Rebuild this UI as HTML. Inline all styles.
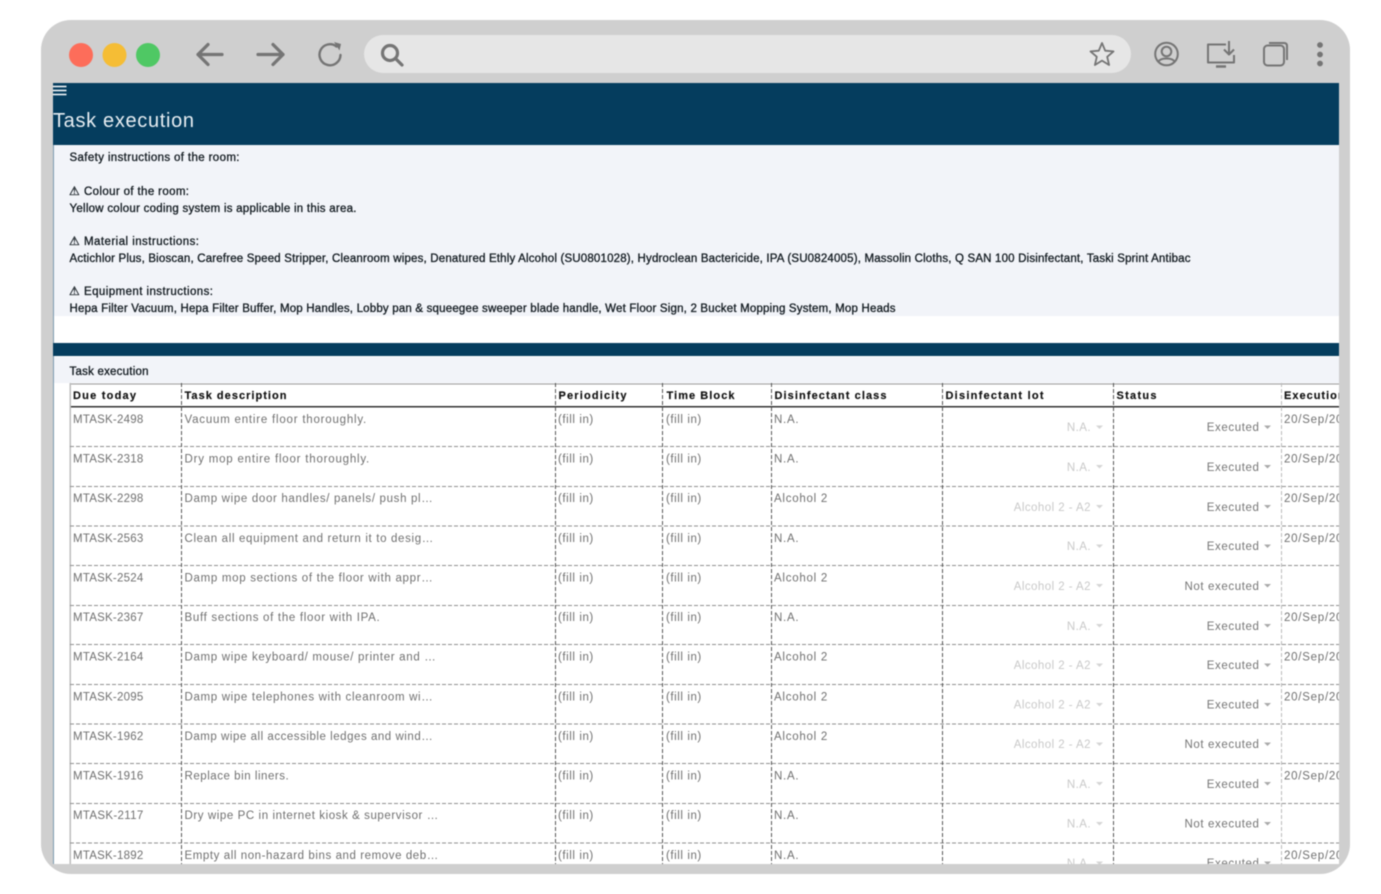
<!DOCTYPE html>
<html><head><meta charset="utf-8"><title>Task execution</title>
<style>
html,body{margin:0;padding:0;background:#fff;width:1381px;height:894px;overflow:hidden}
svg{display:block;position:absolute;left:0;top:0;filter:blur(.4px)}
text{font-family:"Liberation Sans",sans-serif;white-space:pre}
.b{font-size:11.5px;fill:#141c22;stroke:#141c22;stroke-width:.32px}
.h{font-size:11px;font-weight:bold;fill:#111;letter-spacing:1px;stroke:#111;stroke-width:.15px}
.c{font-size:11.5px;fill:#707070;letter-spacing:.75px}
.l{font-size:11.5px;fill:#c9c9c9;letter-spacing:.45px;text-anchor:end}
.s{font-size:11.5px;fill:#757575;letter-spacing:.6px;text-anchor:end}
.w{font-family:"DejaVu Sans",sans-serif;font-size:12px;fill:#141c22;stroke:#141c22;stroke-width:.35px}
.ic{fill:none;stroke:#757575;stroke-width:3.200;stroke-linecap:round;stroke-linejoin:round}
.ic2{fill:none;stroke:#757575;stroke-width:2;stroke-linejoin:round}
.hd{stroke:#8f8f8f;stroke-width:1;stroke-dasharray:4 2;fill:none}
.vd{stroke:#555;stroke-width:1;stroke-dasharray:4 2;fill:none}
</style></head><body>
<svg width="1381" height="894" viewBox="0 0 1381 894" xmlns="http://www.w3.org/2000/svg">
<defs><clipPath id="cp"><rect x="53" y="83" width="1286" height="781"/></clipPath></defs>
<rect x="41" y="20" width="1309" height="854" rx="30" fill="#cfcfcf"/>
<circle cx="81" cy="55" r="12" fill="#fd6d5a"/><circle cx="114.500" cy="55" r="12" fill="#f5bd35"/><circle cx="148" cy="55" r="12" fill="#4fc864"/>
<path class="ic" d="M222 54.500H198M208 44.500L198 54.500L208 64.500"/>
<path class="ic" d="M258 54.500H283M273 44.500L283 54.500L273 64.500"/>
<path class="ic" style="stroke-width:2.400" d="M336.500 46.500A10.500 10.500 0 1 0 340.500 55"/><path d="M334 42L341 44L339.500 50.500Z" fill="#757575"/>
<rect x="364" y="35" width="767" height="38" rx="19" fill="#e6e6e6"/>
<circle cx="390" cy="53" r="7.500" class="ic"/><path class="ic" d="M396 59L402 65"/>
<path class="ic2" style="stroke-width:1.800" d="M1102 43L1105.200 50.700L1113.500 51.400L1107.200 56.800L1109.100 65L1102 60.600L1094.900 65L1096.800 56.800L1090.500 51.400L1098.800 50.700Z"/>
<circle cx="1166.500" cy="54" r="11.300" class="ic2"/><circle cx="1166.500" cy="51.500" r="4.800" class="ic2"/><path class="ic2" d="M1158.500 61.500C1161 57.500 1172 57.500 1174.500 61.500"/>
<path class="ic2" d="M1226 44.500H1208V62.500H1234V55"/><path class="ic2" d="M1216 66.500H1226" style="stroke-width:2.500"/>
<path class="ic2" d="M1229 41V54M1224 49.500L1229 54.500L1234 49.500"/>
<rect x="1264" y="45.500" width="20" height="20" rx="3.500" class="ic2"/><path class="ic2" d="M1269 43H1284Q1287 43 1287 46V60"/>
<circle cx="1320" cy="45" r="2.900" fill="#757575"/><circle cx="1320" cy="54.500" r="2.900" fill="#757575"/><circle cx="1320" cy="63.500" r="2.900" fill="#757575"/>

<g clip-path="url(#cp)">
<rect x="53" y="83" width="1286" height="781" fill="#fff"/>
<rect x="53" y="83" width="1286" height="62" fill="#053d5e"/>
<rect x="53" y="145" width="1" height="719" fill="#7d9bb0"/>
<path d="M53 86.500H66.500M53 90.500H66.500M53 94.500H66.500" stroke="#fff" stroke-width="1.500"/>
<text x="53" y="127" font-size="20" fill="#e6edf2" textLength="141">Task execution</text>
<rect x="54" y="145" width="1285" height="171" fill="#f2f4f9"/>
<text class="b" x="69.500" y="161" textLength="170">Safety instructions of the room:</text>
<text class="w" x="69" y="195">⚠</text><text class="b" x="84" y="195" textLength="105">Colour of the room:</text>
<text class="b" x="69.500" y="212" textLength="287">Yellow colour coding system is applicable in this area.</text>
<text class="w" x="69" y="245">⚠</text><text class="b" x="84" y="245" textLength="115">Material instructions:</text>
<text class="b" x="69.500" y="262" textLength="1121">Actichlor Plus, Bioscan, Carefree Speed Stripper, Cleanroom wipes, Denatured Ethly Alcohol (SU0801028), Hydroclean Bactericide, IPA (SU0824005), Massolin Cloths, Q SAN 100 Disinfectant, Taski Sprint Antibac</text>
<text class="w" x="69" y="295">⚠</text><text class="b" x="84" y="295" textLength="129">Equipment instructions:</text>
<text class="b" x="69.500" y="312" textLength="826">Hepa Filter Vacuum, Hepa Filter Buffer, Mop Handles, Lobby pan &amp; squeegee sweeper blade handle, Wet Floor Sign, 2 Bucket Mopping System, Mop Heads</text>
<rect x="53" y="343" width="1286" height="13" fill="#053d5e"/>
<rect x="54" y="357" width="1285" height="26" fill="#f2f4f9"/>
<text class="b" x="69.500" y="375" textLength="79">Task execution</text>
<rect x="70" y="383.500" width="1269" height="1" fill="#999"/>
<rect x="70" y="406" width="1269" height="1.500" fill="#333"/>
<rect x="69.500" y="383" width="1.500" height="481" fill="#bdbdbd"/>
<path class="hd" d="M70 446.500H1339M70 486.500H1339M70 526H1339M70 565.500H1339M70 605.500H1339M70 644.500H1339M70 684.500H1339M70 724H1339M70 763.500H1339M70 803.500H1339M70 843H1339"/>
<path class="vd" d="M181.500 383V864M555.500 383V864M662.500 383V864M771.500 383V864M942.500 383V864M1113.500 383V864"/>
<path class="vd" style="stroke:#bbb" d="M1281.500 383V864"/>
<g>
<text class="h" x="73" y="399" textLength="64">Due today</text>
<text class="h" x="184.500" y="399" textLength="103">Task description</text>
<text class="h" x="558.500" y="399" textLength="69">Periodicity</text>
<text class="h" x="666.500" y="399" textLength="69">Time Block</text>
<text class="h" x="774.500" y="399" textLength="113">Disinfectant class</text>
<text class="h" x="945.500" y="399" textLength="99">Disinfectant lot</text>
<text class="h" x="1116.500" y="399" textLength="41">Status</text>
<text class="h" x="1284" y="399">Execution date</text>
</g>

<g><text class="c" x="73" y="423" textLength="71">MTASK-2498</text><text class="c" x="184.500" y="423" textLength="182.500">Vacuum entire floor thoroughly.</text><text class="c" x="558" y="423" textLength="36">(fill in)</text><text class="c" x="666" y="423" textLength="36">(fill in)</text><text class="c" x="774" y="423">N.A.</text><text class="l" x="1091" y="431">N.A.</text><path d="M1096 425.500h7l-3.500 3.500z" fill="#d5d5d5"/><text class="s" x="1259.500" y="431">Executed</text><path d="M1264 425.500h7l-3.500 3.500z" fill="#aaa"/><text class="c" x="1284" y="423">20/Sep/2023</text></g>

<g><text class="c" x="73" y="462.500" textLength="71">MTASK-2318</text><text class="c" x="184.500" y="462.500" textLength="185.500">Dry mop entire floor thoroughly.</text><text class="c" x="558" y="462.500" textLength="36">(fill in)</text><text class="c" x="666" y="462.500" textLength="36">(fill in)</text><text class="c" x="774" y="462.500">N.A.</text><text class="l" x="1091" y="471">N.A.</text><path d="M1096 465h7l-3.500 3.500z" fill="#d5d5d5"/><text class="s" x="1259.500" y="471">Executed</text><path d="M1264 465h7l-3.500 3.500z" fill="#aaa"/><text class="c" x="1284" y="462.500">20/Sep/2023</text></g>

<g><text class="c" x="73" y="502" textLength="71">MTASK-2298</text><text class="c" x="184.500" y="502" textLength="249">Damp wipe door handles/ panels/ push pl…</text><text class="c" x="558" y="502" textLength="36">(fill in)</text><text class="c" x="666" y="502" textLength="36">(fill in)</text><text class="c" x="774" y="502">Alcohol 2</text><text class="l" x="1091" y="511">Alcohol 2 - A2</text><path d="M1096 505h7l-3.500 3.500z" fill="#d5d5d5"/><text class="s" x="1259.500" y="511">Executed</text><path d="M1264 505h7l-3.500 3.500z" fill="#aaa"/><text class="c" x="1284" y="502">20/Sep/2023</text></g>

<g><text class="c" x="73" y="542" textLength="71">MTASK-2563</text><text class="c" x="184.500" y="542" textLength="249.500">Clean all equipment and return it to desig…</text><text class="c" x="558" y="542" textLength="36">(fill in)</text><text class="c" x="666" y="542" textLength="36">(fill in)</text><text class="c" x="774" y="542">N.A.</text><text class="l" x="1091" y="550">N.A.</text><path d="M1096 544.500h7l-3.500 3.500z" fill="#d5d5d5"/><text class="s" x="1259.500" y="550">Executed</text><path d="M1264 544.500h7l-3.500 3.500z" fill="#aaa"/><text class="c" x="1284" y="542">20/Sep/2023</text></g>

<g><text class="c" x="73" y="581.500" textLength="71">MTASK-2524</text><text class="c" x="184.500" y="581.500" textLength="249">Damp mop sections of the floor with appr…</text><text class="c" x="558" y="581.500" textLength="36">(fill in)</text><text class="c" x="666" y="581.500" textLength="36">(fill in)</text><text class="c" x="774" y="581.500">Alcohol 2</text><text class="l" x="1091" y="590">Alcohol 2 - A2</text><path d="M1096 584h7l-3.500 3.500z" fill="#d5d5d5"/><text class="s" x="1259.500" y="590">Not executed</text><path d="M1264 584h7l-3.500 3.500z" fill="#aaa"/></g>

<g><text class="c" x="73" y="621" textLength="71">MTASK-2367</text><text class="c" x="184.500" y="621" textLength="196">Buff sections of the floor with IPA.</text><text class="c" x="558" y="621" textLength="36">(fill in)</text><text class="c" x="666" y="621" textLength="36">(fill in)</text><text class="c" x="774" y="621">N.A.</text><text class="l" x="1091" y="630">N.A.</text><path d="M1096 624h7l-3.500 3.500z" fill="#d5d5d5"/><text class="s" x="1259.500" y="630">Executed</text><path d="M1264 624h7l-3.500 3.500z" fill="#aaa"/><text class="c" x="1284" y="621">20/Sep/2023</text></g>

<g><text class="c" x="73" y="660.500" textLength="71">MTASK-2164</text><text class="c" x="184.500" y="660.500" textLength="252">Damp wipe keyboard/ mouse/ printer and …</text><text class="c" x="558" y="660.500" textLength="36">(fill in)</text><text class="c" x="666" y="660.500" textLength="36">(fill in)</text><text class="c" x="774" y="660.500">Alcohol 2</text><text class="l" x="1091" y="669">Alcohol 2 - A2</text><path d="M1096 663.500h7l-3.500 3.500z" fill="#d5d5d5"/><text class="s" x="1259.500" y="669">Executed</text><path d="M1264 663.500h7l-3.500 3.500z" fill="#aaa"/><text class="c" x="1284" y="660.500">20/Sep/2023</text></g>

<g><text class="c" x="73" y="700.500" textLength="71">MTASK-2095</text><text class="c" x="184.500" y="700.500" textLength="249">Damp wipe telephones with cleanroom wi…</text><text class="c" x="558" y="700.500" textLength="36">(fill in)</text><text class="c" x="666" y="700.500" textLength="36">(fill in)</text><text class="c" x="774" y="700.500">Alcohol 2</text><text class="l" x="1091" y="708.500">Alcohol 2 - A2</text><path d="M1096 703h7l-3.500 3.500z" fill="#d5d5d5"/><text class="s" x="1259.500" y="708.500">Executed</text><path d="M1264 703h7l-3.500 3.500z" fill="#aaa"/><text class="c" x="1284" y="700.500">20/Sep/2023</text></g>

<g><text class="c" x="73" y="740" textLength="71">MTASK-1962</text><text class="c" x="184.500" y="740" textLength="249">Damp wipe all accessible ledges and wind…</text><text class="c" x="558" y="740" textLength="36">(fill in)</text><text class="c" x="666" y="740" textLength="36">(fill in)</text><text class="c" x="774" y="740">Alcohol 2</text><text class="l" x="1091" y="748">Alcohol 2 - A2</text><path d="M1096 742.500h7l-3.500 3.500z" fill="#d5d5d5"/><text class="s" x="1259.500" y="748">Not executed</text><path d="M1264 742.500h7l-3.500 3.500z" fill="#aaa"/></g>

<g><text class="c" x="73" y="779.500" textLength="71">MTASK-1916</text><text class="c" x="184.500" y="779.500" textLength="105">Replace bin liners.</text><text class="c" x="558" y="779.500" textLength="36">(fill in)</text><text class="c" x="666" y="779.500" textLength="36">(fill in)</text><text class="c" x="774" y="779.500">N.A.</text><text class="l" x="1091" y="788">N.A.</text><path d="M1096 782h7l-3.500 3.500z" fill="#d5d5d5"/><text class="s" x="1259.500" y="788">Executed</text><path d="M1264 782h7l-3.500 3.500z" fill="#aaa"/><text class="c" x="1284" y="779.500">20/Sep/2023</text></g>

<g><text class="c" x="73" y="819" textLength="71">MTASK-2117</text><text class="c" x="184.500" y="819" textLength="254.500">Dry wipe PC in internet kiosk &amp; supervisor …</text><text class="c" x="558" y="819" textLength="36">(fill in)</text><text class="c" x="666" y="819" textLength="36">(fill in)</text><text class="c" x="774" y="819">N.A.</text><text class="l" x="1091" y="827.500">N.A.</text><path d="M1096 822h7l-3.500 3.500z" fill="#d5d5d5"/><text class="s" x="1259.500" y="827.500">Not executed</text><path d="M1264 822h7l-3.500 3.500z" fill="#aaa"/></g>

<g><text class="c" x="73" y="859" textLength="71">MTASK-1892</text><text class="c" x="184.500" y="859" textLength="254.500">Empty all non-hazard bins and remove deb…</text><text class="c" x="558" y="859" textLength="36">(fill in)</text><text class="c" x="666" y="859" textLength="36">(fill in)</text><text class="c" x="774" y="859">N.A.</text><text class="l" x="1091" y="867">N.A.</text><path d="M1096 861.500h7l-3.500 3.500z" fill="#d5d5d5"/><text class="s" x="1259.500" y="867">Executed</text><path d="M1264 861.500h7l-3.500 3.500z" fill="#aaa"/><text class="c" x="1284" y="859">20/Sep/2023</text></g>
</g>
</svg>
</body></html>
